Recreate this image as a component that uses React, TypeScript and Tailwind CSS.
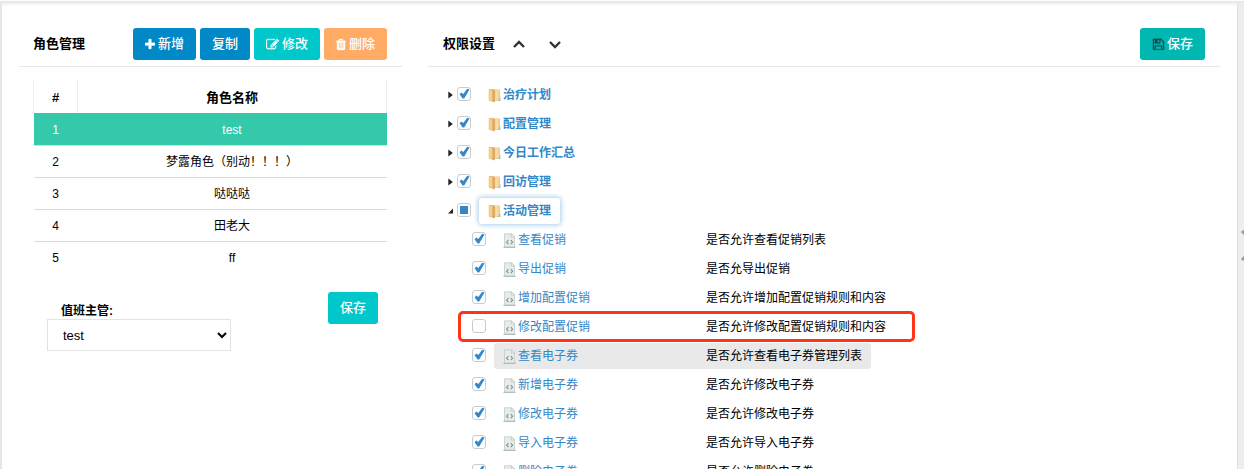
import React, { useEffect, useRef, useState } from 'react';

interface Role {
  id: number;
  name: string;
}

interface Permission {
  name: string;
  description: string;
  checked: boolean;
  hovered?: boolean;
  marked?: boolean;
}

interface CheckboxProps {
  label: string;
  defaultChecked?: boolean;
  indeterminate?: boolean;
}

const roles: Role[] = [
  { id: 1, name: 'test' },
  { id: 2, name: '梦露角色（别动！！！）' },
  { id: 3, name: '哒哒哒' },
  { id: 4, name: '田老大' },
  { id: 5, name: 'ff' },
];

const folders = ['治疗计划', '配置管理', '今日工作汇总', '回访管理'];

const permissions: Permission[] = [
  { name: '查看促销', description: '是否允许查看促销列表', checked: true },
  { name: '导出促销', description: '是否允导出促销', checked: true },
  { name: '增加配置促销', description: '是否允许增加配置促销规则和内容', checked: true },
  { name: '修改配置促销', description: '是否允许修改配置促销规则和内容', checked: false, marked: true },
  { name: '查看电子券', description: '是否允许查看电子券管理列表', checked: true, hovered: true },
  { name: '新增电子券', description: '是否允许修改电子券', checked: true },
  { name: '修改电子券', description: '是否允许修改电子券', checked: true },
  { name: '导入电子券', description: '是否允许导入电子券', checked: true },
  { name: '删除电子券', description: '是否允许删除电子券', checked: true },
];

const icons = {
  plus: {
    viewBox: '192 0 1408 1792',
    path: 'M1600 736v192q0 40-28 68t-68 28h-416v416q0 40-28 68t-68 28h-192q-40 0-68-28t-28-68v-416h-416q-40 0-68-28t-28-68v-192q0-40 28-68t68-28h416v-416q0-40 28-68t68-28h192q40 0 68 28t28 68v416h416q40 0 68 28t28 68z',
  },
  edit: {
    viewBox: '0 0 1792 1792',
    path: 'M888 1184l116-116-152-152-116 116v56h96v96h56zm440-720q-16-16-33 1l-350 350q-17 17-1 33t33-1l350-350q17-17 1-33zm80 594v190q0 119-84.5 203.5t-203.5 84.5h-832q-119 0-203.5-84.5t-84.5-203.5v-832q0-119 84.5-203.5t203.5-84.5h832q63 0 117 25 15 7 18 23 3 17-9 29l-49 49q-14 14-32 8-23-6-45-6h-832q-66 0-113 47t-47 113v832q0 66 47 113t113 47h832q66 0 113-47t47-113v-126q0-13 9-22l64-64q15-15 35-7t20 29zm-96-738l288 288-672 672h-288v-288zm444 132l-92 92-288-288 92-92q28-28 68-28t68 28l152 152q28 28 28 68t-28 68z',
  },
  trash: {
    viewBox: '192 0 1408 1792',
    path: 'M704 1376v-704q0-14-9-23t-23-9h-64q-14 0-23 9t-9 23v704q0 14 9 23t23 9h64q14 0 23-9t9-23zm256 0v-704q0-14-9-23t-23-9h-64q-14 0-23 9t-9 23v704q0 14 9 23t23 9h64q14 0 23-9t9-23zm256 0v-704q0-14-9-23t-23-9h-64q-14 0-23 9t-9 23v704q0 14 9 23t23 9h64q14 0 23-9t9-23zm-544-992h448l-48-117q-7-9-17-11h-317q-10 2-17 11zm928 32v64q0 14-9 23t-23 9h-96v948q0 83-47 143.5t-113 60.5h-832q-66 0-113-58.5t-47-141.5v-952h-96q-14 0-23-9t-9-23v-64q0-14 9-23t23-9h309l70-167q15-37 54-63t79-26h320q40 0 79 26t54 63l70 167h309q14 0 23 9t9 23z',
  },
  save: {
    viewBox: '0 0 1792 1792',
    path: 'M512 1536h768v-384h-768v384zm896 0h128v-896q0-14-10-38.5t-20-34.5l-281-281q-10-10-34-20t-39-10v416q0 40-28 68t-68 28h-576q-40 0-68-28t-28-68v-416h-128v1280h128v-416q0-40 28-68t68-28h832q40 0 68 28t28 68v416zm-384-928v-320q0-13-9.5-22.5t-22.5-9.5h-192q-13 0-22.5 9.5t-9.5 22.5v320q0 13 9.5 22.5t22.5 9.5h192q13 0 22.5-9.5t9.5-22.5zm640 32v896q0 40-28 68t-68 28h-1344q-40 0-68-28t-28-68v-1344q0-40 28-68t68-28h928q40 0 88 20t76 48l280 280q28 28 48 76t20 88z',
  },
};

const Icon: React.FC<{ name: keyof typeof icons; className: string }> = ({ name, className }) => (
  <svg
    viewBox={icons[name].viewBox}
    fill="currentColor"
    stroke="currentColor"
    strokeWidth="40"
    aria-hidden="true"
    className={`h-[13px] ${className}`}
  >
    <path d={icons[name].path} />
  </svg>
);

const FolderIcon: React.FC = () => (
  <svg viewBox="0 0 13 15" aria-hidden="true" className="mt-[2px] h-[15px] w-[13px] shrink-0">
    <path d="M6 1.5h5.2q.8 0 .8.8v9.9q0 .8-.8.8H6z" fill="#eecb8c" />
    <path d="M7.2 1.5h3.2v11H7.2z" fill="#f7dba6" />
    <path d="M.8 1.8Q.8 1 1.6 1h3.2q.9.2 1.7 1v12.3l-1.2-.2-4-1.4q-.5-.2-.5-.8z" fill="#e9b56a" />
    <path d="M1.3 1.7h2.6v11l-2.6-.8z" fill="#f5d294" />
    <path d="M6.1 2v12.2" stroke="#c08f4c" strokeWidth=".7" />
    <path d="M10.2 13l2.2-4.2v3.6q0 .6-.6.6z" fill="#9dbac0" />
  </svg>
);

const FileIcon: React.FC = () => (
  <svg viewBox="0 0 13 15" aria-hidden="true" className="mt-[2px] h-[15px] w-[13px] shrink-0">
    <path d="M1.5.8h7l3 3v10.4h-10z" fill="#e6ecea" stroke="#bcc9c6" strokeWidth=".7" />
    <path d="M8.3.8v3.2h3.2z" fill="#f8fbfa" stroke="#a9b8b5" strokeWidth=".6" />
    <path d="M.4 14.3h12.2" stroke="#9fb1ad" strokeWidth=".9" />
    <path d="M5.4 7.2L3.6 9.2l1.8 2M7.8 7.2l1.8 2-1.8 2" fill="none" stroke="#84918e" strokeWidth="1.1" />
  </svg>
);

const Checkbox: React.FC<CheckboxProps> = ({ label, defaultChecked, indeterminate }) => {
  const ref = useRef<HTMLInputElement>(null);

  useEffect(() => {
    if (ref.current) {
      ref.current.indeterminate = !!indeterminate;
    }
  }, [indeterminate]);

  return (
    <span className="relative mb-[2px] size-[14px] shrink-0">
      <input
        ref={ref}
        type="checkbox"
        aria-label={label}
        defaultChecked={defaultChecked}
        className="peer block size-[14px] appearance-none rounded-[3px] border border-[#c9cccf] bg-white"
      />
      <svg
        viewBox="0 0 14 14"
        aria-hidden="true"
        className="pointer-events-none absolute inset-0 hidden size-[14px] peer-checked:block"
      >
        <path d="M2.6 7.2l1.7-1.6 2 1.5L10.2 1.8l2.3.6L7.2 11.4H5.6z" fill="#3487c8" />
      </svg>
      <span className="pointer-events-none absolute inset-[3px] hidden bg-[#3487c8] peer-indeterminate:block" />
    </span>
  );
};

const App: React.FC = () => {
  const [selectedRole, setSelectedRole] = useState(1);

  return (
    <div className="flex h-screen flex-col overflow-hidden bg-white pt-px font-['Liberation_Sans','Noto_Sans_CJK_SC',sans-serif] text-xs text-black">
      <div className="h-[2px] shrink-0 bg-[#e9e9e9] shadow-[0_1px_3px_#e4e4e4]" />
      <div className="flex min-h-0 flex-1 border-l-2 border-[#e6e6e6]">
        <main className="grid min-w-0 flex-1 grid-cols-3 pr-1 pl-1">
          <section className="px-[13px] pt-[25px]">
            <div className="flex items-center justify-between border-b border-[#e7e7e7] pr-[15px] pb-[6px] pl-[14px]">
              <h2 className="text-[13px] font-bold">角色管理</h2>
              <div className="flex gap-1 text-[13px] font-medium text-white">
                <button className="flex h-8 items-center gap-[3px] rounded-[3px] bg-[#0088c7] px-3">
                  <Icon name="plus" className="w-[10px]" />
                  新增
                </button>
                <button className="flex h-8 items-center rounded-[3px] bg-[#0088c7] px-3">复制</button>
                <button className="flex h-8 items-center gap-[3px] rounded-[3px] bg-[#00c7ca] px-3">
                  <Icon name="edit" className="w-[13px]" />
                  修改
                </button>
                <button className="flex h-8 items-center gap-[3px] rounded-[3px] bg-[#ffab66] px-3">
                  <Icon name="trash" className="w-[10px]" />
                  删除
                </button>
              </div>
            </div>

            <div className="pt-[13px] pr-[15px] pl-[14px]">
              <table className="w-full table-fixed border-collapse text-center">
                <thead>
                  <tr className="h-[33px] text-[13px]">
                    <th className="w-11 border-x border-[#ececec] pt-[2px] font-bold">#</th>
                    <th className="border-x border-[#ececec] pt-[2px] font-bold">角色名称</th>
                  </tr>
                </thead>
                <tbody>
                  {roles.map((role) => (
                    <tr
                      key={role.id}
                      onClick={() => setSelectedRole(role.id)}
                      className={`h-8 border-b border-[#cfdfdf] last:border-b-0 ${
                        role.id === selectedRole ? 'bg-[#34c9ab] text-white' : ''
                      }`}
                    >
                      <td className="pt-[2px]">{role.id}</td>
                      <td className="pt-[2px]">{role.name}</td>
                    </tr>
                  ))}
                </tbody>
              </table>
            </div>

            <div className="flex items-start justify-between pt-[19px] pr-6 pl-7">
              <div className="w-[184px] pt-[11px]">
                <label htmlFor="supervisor" className="block pl-[14px] leading-4 font-bold">
                  值班主管:
                </label>
                <select
                  id="supervisor"
                  className="h-8 w-full border border-[#e3e3e3] bg-white pl-[11px] text-[13px]"
                >
                  <option>test</option>
                </select>
              </div>
              <button className="h-8 rounded-[3px] bg-[#00c7ca] px-3 text-[13px] font-medium text-white">保存</button>
            </div>
          </section>

          <section className="col-span-2 px-[13px] pt-[25px]">
            <div className="flex items-center justify-between border-b border-[#e7e7e7] pr-[15px] pb-[6px] pl-[15px]">
              <div className="flex items-center">
                <h2 className="text-[13px] font-bold">权限设置</h2>
                <button aria-label="收起" className="ml-[18px]">
                  <svg viewBox="0 0 12 12" className="size-3" fill="none" stroke="#333" strokeWidth="2.4">
                    <path d="M1 9l5-5 5 5" />
                  </svg>
                </button>
                <button aria-label="展开" className="ml-6">
                  <svg viewBox="0 0 12 12" className="size-3" fill="none" stroke="#333" strokeWidth="2.4">
                    <path d="M1 4l5 5 5-5" />
                  </svg>
                </button>
              </div>
              <button className="flex h-8 items-center gap-[2px] rounded-[3px] bg-[#00b7b2] px-3 text-[13px] font-medium text-white">
                <Icon name="save" className="w-[13px] text-[#25474b]" />
                保存
              </button>
            </div>

            <ul className="pt-[13px] pl-5">
              {folders.map((folder) => (
                <li key={folder} className="flex h-[29px] items-center">
                  <svg viewBox="0 0 5 8" aria-hidden="true" className="mr-1 h-2 w-[5px]">
                    <path d="M.3.6L4.8 4 .3 7.4z" fill="#222" />
                  </svg>
                  <Checkbox label={folder} defaultChecked />
                  <a href="#" className="ml-2 flex h-[26px] items-center gap-[2px] px-[9px] font-bold text-[#3487c8]">
                    <FolderIcon />
                    {folder}
                  </a>
                </li>
              ))}
              <li>
                <div className="flex h-[29px] items-center">
                  <svg viewBox="0 0 5 8" aria-hidden="true" className="mr-1 h-2 w-[5px]">
                    <path d="M5 1.5v5H0z" fill="#222" />
                  </svg>
                  <Checkbox label="活动管理" indeterminate />
                  <a
                    href="#"
                    className="ml-2 flex h-[26px] items-center gap-[2px] rounded-[3px] bg-white px-[9px] font-bold text-[#3487c8] shadow-[0_0_5px_1px_#a3cdec]"
                  >
                    <FolderIcon />
                    活动管理
                  </a>
                </div>
                <ul className="pl-6">
                  {permissions.map((item) => (
                    <li key={item.name} className="relative flex h-[29px] w-fit items-center">
                      <Checkbox label={item.name} defaultChecked={item.checked} />
                      <div
                        className={`ml-2 flex h-[26px] items-center rounded-[3px] px-[9px] ${
                          item.hovered ? 'bg-[#e9e9e9]' : ''
                        }`}
                      >
                        <a href="#" className="flex w-[203px] items-center gap-[2px] text-[#3487c8]">
                          <FileIcon />
                          {item.name}
                        </a>
                        <span>{item.description}</span>
                      </div>
                      {item.marked && (
                        <span className="pointer-events-none absolute -inset-y-px -right-5 -left-[14px] rounded-[5px] border-[3px] border-[#fb3516]" />
                      )}
                    </li>
                  ))}
                </ul>
              </li>
            </ul>
          </section>
        </main>
        <aside className="w-[7px] shrink-0 overflow-hidden border-l border-[#e0e0e0] bg-[#eee] pt-[225px]">
          <svg viewBox="0 0 6 36" aria-hidden="true" className="h-9 w-[6px]" fill="none" stroke="#999" strokeWidth="3">
            <path d="M4 3l5 5M4 32l5-5" />
          </svg>
        </aside>
      </div>
    </div>
  );
};

export default App;
